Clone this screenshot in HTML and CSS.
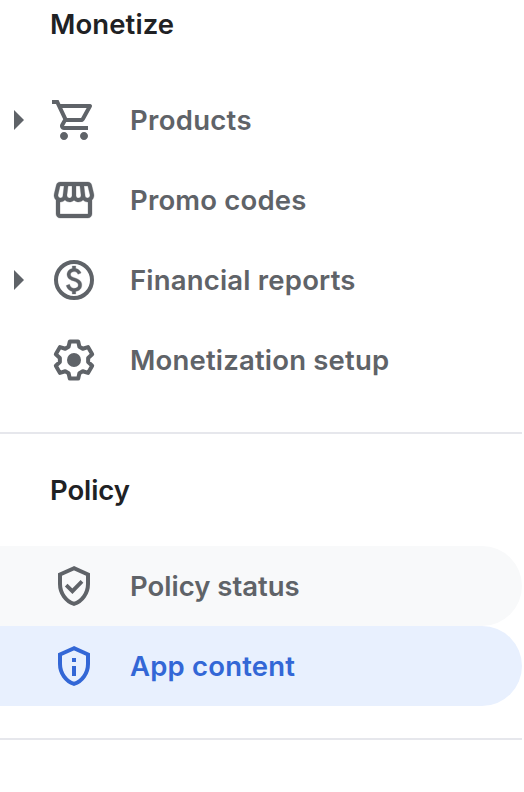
FILE: index.html
```html
<!DOCTYPE html>
<html lang="en">
<head>
<meta charset="utf-8">
<title>Navigation</title>
<link rel="stylesheet" href="styles.css">
</head>
<body>
<nav class="sidebar">
  <section class="group">
    <h2 class="heading heading-monetize">Monetize</h2>
    <a class="item products">
      <svg class="arrow" viewBox="0 0 10 20"><path d="M0 0 10 10 0 20z"/></svg>
      <svg class="icon" viewBox="0 0 24 24"><path d="M15.55 13c.75 0 1.41-.41 1.75-1.03l3.58-6.49A.996.996 0 0 0 20.01 4H5.21l-.94-2H1v2h2l3.6 7.59-1.35 2.44C4.52 15.37 5.48 17 7 17h12v-2H7l1.1-2h7.45zM6.16 6h12.15l-2.76 5H8.53L6.16 6zM7 18c-1.1 0-1.99.9-1.99 2S5.9 22 7 22s2-.9 2-2-.9-2-2-2zm10 0c-1.1 0-1.99.9-1.99 2s.89 2 1.99 2 2-.9 2-2-.9-2-2-2z"/></svg>
      <span class="label">Products</span>
    </a>
    <a class="item promo">
      <span class="arrow"></span>
      <svg class="icon" viewBox="0 0 24 24"><path class="heavy" d="M21.9 8.89l-1.05-4.37c-.22-.9-1-1.52-1.91-1.52H5.05c-.9 0-1.69.63-1.9 1.52L2.1 8.89c-.24 1.02-.02 2.06.62 2.88.08.11.19.19.28.29V19c0 1.1.9 2 2 2h14c1.1 0 2-.9 2-2v-6.94c.09-.09.2-.18.28-.28.64-.82.87-1.87.62-2.89zm-2.99-3.9l1.05 4.37c.1.42.01.84-.25 1.17-.14.18-.44.47-.94.47-.61 0-1.14-.49-1.21-1.14L16.98 5l1.93-.01zM13 5h1.96l.54 4.52c.05.39-.07.78-.33 1.07-.22.26-.54.41-.95.41-.67 0-1.22-.59-1.22-1.31V5zM8.49 9.52L9.04 5H11v4.69c0 .72-.55 1.31-1.29 1.31-.34 0-.65-.15-.89-.41-.25-.29-.37-.68-.33-1.07zm-4.45-.16L5.05 5h1.97l-.58 4.86c-.08.65-.6 1.14-1.21 1.14-.49 0-.8-.29-.93-.47-.27-.32-.36-.75-.26-1.17zM5 19v-6.03c.08.01.15.03.23.03.87 0 1.66-.36 2.24-.95.6.6 1.4.95 2.31.95.87 0 1.65-.36 2.23-.93.59.57 1.39.93 2.29.93.84 0 1.64-.35 2.24-.95.58.59 1.37.95 2.24.95.08 0 .15-.02.23-.03V19H5z"/></svg>
      <span class="label">Promo codes</span>
    </a>
    <a class="item financial">
      <svg class="arrow" viewBox="0 0 10 20"><path d="M0 0 10 10 0 20z"/></svg>
      <svg class="icon" viewBox="0 0 24 24"><circle class="line" cx="12" cy="12" r="9"/><path class="heavy" d="M12.89 11.1c-1.78-.59-2.64-.96-2.64-1.9 0-1.02 1.11-1.39 1.81-1.39 1.31 0 1.79.99 1.9 1.34l1.58-.67c-.15-.44-.82-1.91-2.66-2.23V5h-1.75v1.26c-2.6.56-2.62 2.85-2.62 2.96 0 2.27 2.25 2.91 3.35 3.31 1.58.56 2.28 1.07 2.28 2.03 0 1.13-1.05 1.61-1.98 1.61-1.82 0-2.34-1.87-2.4-2.09l-1.66.67c.63 2.19 2.28 2.78 3.02 2.96V19h1.75v-1.24c.52-.09 3.02-.59 3.02-3.22.01-1.39-.6-2.61-3-3.44z"/></svg>
      <span class="label">Financial reports</span>
    </a>
    <a class="item setup">
      <span class="arrow"></span>
      <svg class="icon" viewBox="0 0 24 24"><path class="line" d="M9.9 2.7h4.2l.6 2.7 1.67.96L19 5.53l2.1 3.64-2.03 1.87v1.92l2.03 1.87-2.1 3.64-2.63-.83-1.67.96-.6 2.7H9.9l-.6-2.7-1.67-.96-2.63.83-2.1-3.64 2.03-1.87v-1.92L2.9 9.17 5 5.53l2.63.83 1.67-.96z"/><circle cx="12" cy="12" r="3.5"/></svg>
      <span class="label">Monetization setup</span>
    </a>
  </section>
  <section class="group group-policy">
    <h2 class="heading heading-policy">Policy</h2>
    <a class="item hovered status">
      <span class="arrow"></span>
      <svg class="icon" viewBox="0 0 24 24"><path class="line" d="M12 3.1 5 6.25V11c0 4.5 2.9 8.7 7 9.95 4.1-1.25 7-5.45 7-9.95V6.25z"/><path class="line check" d="m8.1 11.6 3.1 3L16 9.7"/></svg>
      <span class="label">Policy status</span>
    </a>
    <a class="item selected content">
      <span class="arrow"></span>
      <svg class="icon" viewBox="0 0 24 24"><path class="line" d="M12 3.1 5 6.25V11c0 4.5 2.9 8.7 7 9.95 4.1-1.25 7-5.45 7-9.95V6.25z"/><path d="M11 8h2v2h-2zM11 12h2v5h-2z"/></svg>
      <span class="label">App content</span>
    </a>
  </section>
</nav>
</body>
</html>
```
FILE: styles.css
```css
body {
  margin: 0;
  background: #fff;
  font-family: Inter, "Liberation Sans", sans-serif;
}

.sidebar {
  width: 522px;
}

.group {
  border-bottom: 2px solid #e6e7ec;
  padding-bottom: 32px;
}

.heading {
  margin: 0;
  padding-left: 50px;
  color: #202124;
  font-size: 27.5px;
  font-weight: 600;
  line-height: 48px;
}

.heading-monetize {
  padding-bottom: 32px;
  letter-spacing: 0.1px;
}

.heading-policy {
  padding-top: 32px;
  padding-bottom: 32px;
  letter-spacing: -0.1px;
}

.item {
  display: flex;
  align-items: center;
  height: 80px;
  border-radius: 0 40px 40px 0;
  color: #5f6368;
  fill: currentColor;
}

.hovered {
  background: #f8f9fa;
}

.selected {
  background: #e8f0fe;
  color: #3367d6;
}

.arrow {
  width: 10px;
  height: 20px;
  margin: 0 26px 0 14px;
}

.icon {
  width: 48px;
  height: 48px;
  margin-right: 32px;
}

.line {
  fill: none;
  stroke: currentColor;
  stroke-width: 2;
}

.heavy {
  stroke: currentColor;
  stroke-width: 0.15;
}

.setup .line {
  stroke-linejoin: round;
}

.check {
  stroke-width: 1.9;
}

.label {
  font-size: 27.5px;
  font-weight: 600;
  line-height: 36px;
  letter-spacing: 0.19px;
  white-space: nowrap;
}

.products .label {
  letter-spacing: 0.3px;
}

.status .label {
  letter-spacing: 0;
}
```
